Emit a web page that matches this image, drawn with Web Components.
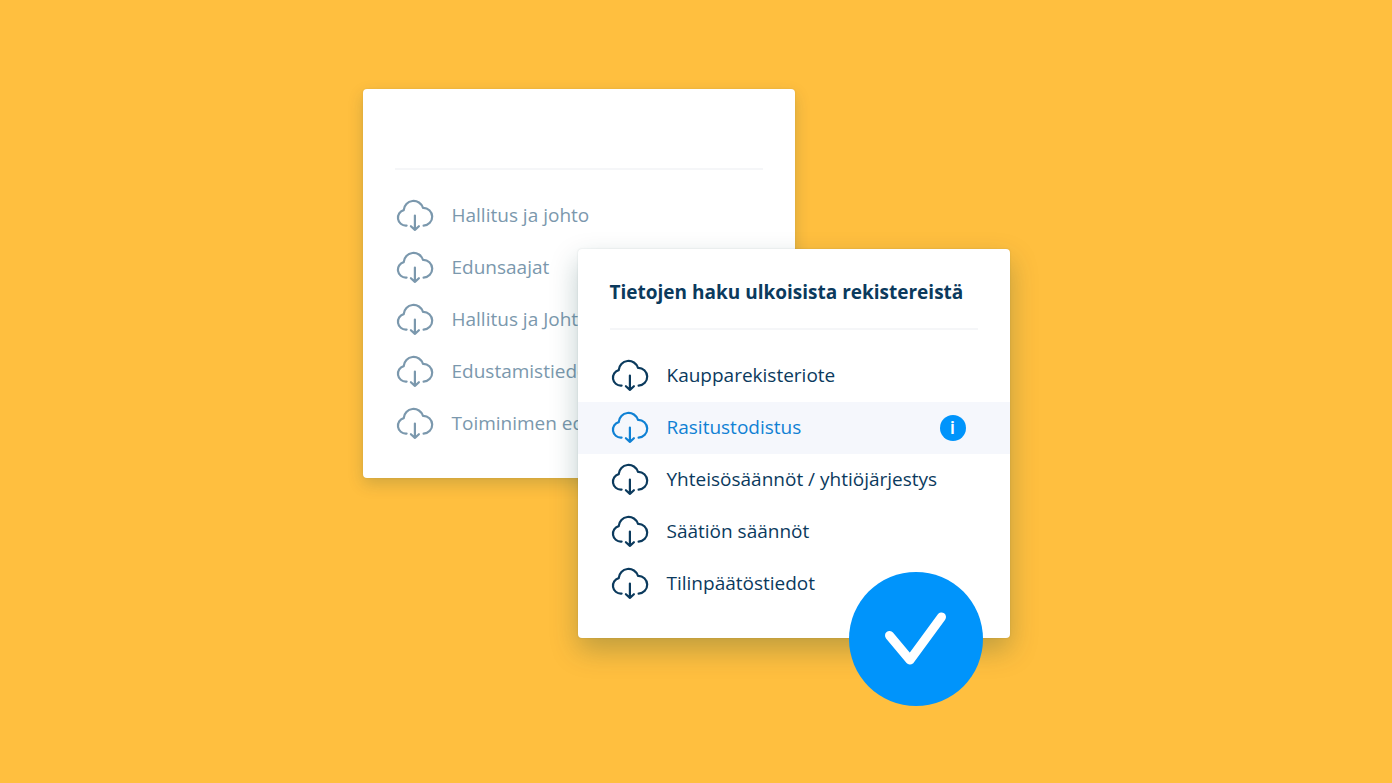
<!DOCTYPE html>
<html lang="fi">
<head>
<meta charset="utf-8">
<meta name="viewport" content="width=device-width, initial-scale=1">
<title>Tietojen haku ulkoisista rekistereistä</title>
<style>
  body { margin: 0; background: #ffbf3f; font-family: "Open Sans", "Noto Sans", sans-serif; }
</style>
</head>
<body>
<register-stage>
  <register-card slot="back" class="muted">
    <register-row>Hallitus ja johto</register-row>
    <register-row>Edunsaajat</register-row>
    <register-row>Hallitus ja Johto</register-row>
    <register-row>Edustamistiedot</register-row>
    <register-row>Toiminimen edustajat</register-row>
  </register-card>
  <register-card slot="front">
    <span slot="title">Tietojen haku ulkoisista rekistereistä</span>
    <register-row>Kaupparekisteriote</register-row>
    <register-row active>Rasitustodistus<info-button slot="end"></info-button></register-row>
    <register-row>Yhteisösäännöt / yhtiöjärjestys</register-row>
    <register-row>Säätiön säännöt</register-row>
    <register-row>Tilinpäätöstiedot</register-row>
  </register-card>
  <check-badge slot="badge"></check-badge>
</register-stage>
<script>
const define = (name, html) => {
  const template = document.createElement('template');
  template.innerHTML = html;
  customElements.define(name, class extends HTMLElement {
    constructor() {
      super();
      this.attachShadow({ mode: 'open' }).append(template.content.cloneNode(true));
    }
  });
};

define('register-stage', `
  <style>
    :host { display: flex; justify-content: center; min-height: 100vh; box-sizing: border-box; padding: 89px 20px 40px 0; }
    main { position: relative; display: grid; grid-template-columns: 215px 217px 215px; grid-template-rows: 160px auto; align-self: flex-start; }
    .back { grid-area: 1 / 1 / 3 / 3; align-self: start; }
    .front { grid-area: 2 / 2 / 3 / 4; z-index: 1; }
    .badge { position: absolute; right: 27px; bottom: -68px; z-index: 2; }
  </style>
  <main>
    <div class="back"><slot name="back"></slot></div>
    <div class="front"><slot name="front"></slot></div>
    <div class="badge"><slot name="badge"></slot></div>
  </main>`);

define('register-card', `
  <style>
    :host { display: block; background: #fff; border-radius: 4px; padding-bottom: 28px; color: #0b3a5d;
      box-shadow: 0 12px 28px rgba(0, 60, 60, .26), 0 0 2px rgba(0, 60, 60, .14); }
    :host(.muted) { color: #7b98ad; box-shadow: 0 6px 16px rgba(0, 60, 60, .18), 0 0 2px rgba(0, 60, 60, .1); }
    header { box-sizing: border-box; height: 81px; margin: 0 32px 20px; padding-top: 28px; border-bottom: 2px solid #f5f6f8; }
    h2 { margin: 0; font-size: 19px; line-height: 30px; font-weight: 700; white-space: nowrap; color: #0b3a5d; }
  </style>
  <section>
    <header><h2><slot name="title"></slot></h2></header>
    <div><slot></slot></div>
  </section>`);

define('register-row', `
  <style>
    :host { display: flex; align-items: center; height: 52px; padding: 0 44px 0 34px; }
    :host([active]) { background: #f5f7fc; color: #1081d4; }
    button { flex: 1; display: flex; align-items: center; gap: 19px; padding: 0 0 2px; border: 0; background: none;
      color: inherit; font: inherit; font-size: 19px; line-height: 28px; text-align: left; white-space: nowrap; cursor: pointer; }
    svg { flex: none; width: 36px; height: 32px; overflow: visible; }
  </style>
  <button type="button">
    <svg viewBox="0 0 36 32" fill="none" stroke="currentColor" stroke-width="2.2" stroke-linecap="round" stroke-linejoin="round" aria-hidden="true">
      <path d="M9.6 26.6H9A7.900 7.900 0 0 1 6.700 11.100A9.900 9.900 0 0 1 26 8.800A8.900 8.900 0 0 1 26.600 26.600"/>
      <path d="M17.900 16.500V30.900M13.900 27.200L17.900 30.900L21.900 27.200"/>
    </svg>
    <span><slot></slot></span>
  </button>
  <slot name="end"></slot>`);

define('info-button', `
  <style>
    :host { display: block; }
    button { display: block; width: 26px; height: 26px; padding: 0; border: 0; border-radius: 50%; background: #0094fb; color: #fff;
      font-family: Roboto, sans-serif; font-size: 19px; line-height: 26px; font-weight: 500; text-align: center; cursor: pointer; }
  </style>
  <button type="button">i</button>`);

define('check-badge', `
  <style>
    :host { display: block; width: 134px; height: 134px; border-radius: 50%; background: #0094fb; }
    svg { display: block; width: 100%; height: 100%; }
  </style>
  <svg viewBox="0 0 134 134" fill="none" stroke="#fff" stroke-width="9" stroke-linecap="round" stroke-linejoin="round" role="img" aria-label="Valmis">
    <path d="M40.500 63.500L61 88L92.500 45"/>
  </svg>`);
</script>
</body>
</html>
